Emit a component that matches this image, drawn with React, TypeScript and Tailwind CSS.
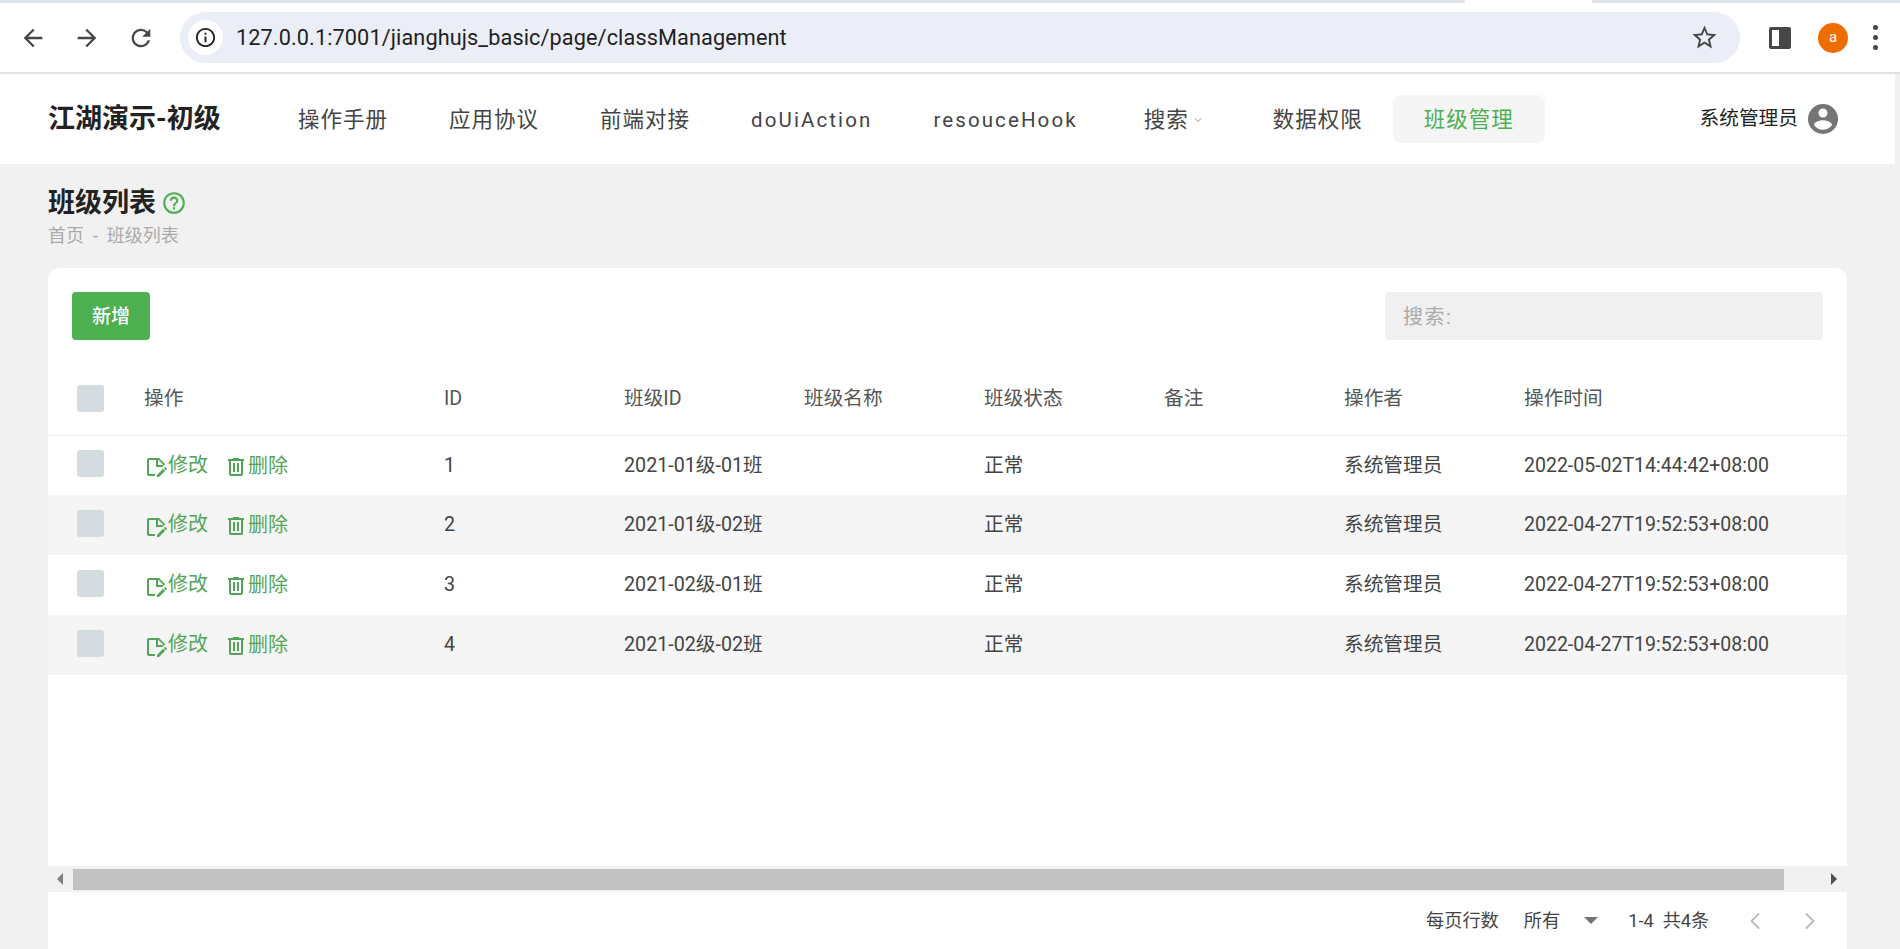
import { ChevronDown, ChevronLeft, ChevronRight } from "lucide-react"

const font = { fontFamily: 'Roboto, "Noto Sans CJK SC", sans-serif' }

const cjkNav = "text-[21.5px] tracking-[1px]"
const latinNav = "text-[20.5px] tracking-[2.1px]"
const navItems = [
  { label: "操作手册", cls: cjkNav },
  { label: "应用协议", cls: cjkNav },
  { label: "前端对接", cls: cjkNav },
  { label: "doUiAction", cls: latinNav },
  { label: "resouceHook", cls: latinNav },
]
const columns = ["操作", "ID", "班级ID", "班级名称", "班级状态", "备注", "操作者", "操作时间"]
const rows = [
  { id: 1, classId: "2021-01级-01班", time: "2022-05-02T14:44:42+08:00" },
  { id: 2, classId: "2021-01级-02班", time: "2022-04-27T19:52:53+08:00" },
  { id: 3, classId: "2021-02级-01班", time: "2022-04-27T19:52:53+08:00" },
  { id: 4, classId: "2021-02级-02班", time: "2022-04-27T19:52:53+08:00" },
]

const gridCols = "grid grid-cols-[80px_300px_180px_180px_180px_180px_180px_180px_1fr] items-center"

const Mdi = ({ d, className }: { d: string; className?: string }) => (
  <svg viewBox="0 0 24 24" fill="currentColor" className={className}>
    <path d={d} />
  </svg>
)

const icons = {
  back: "M20 11H7.83l5.59-5.59L12 4l-8 8 8 8 1.41-1.41L7.83 13H20v-2z",
  forward: "M4 11h12.17l-5.59-5.59L12 4l8 8-8 8-1.41-1.41L16.17 13H4v-2z",
  reload:
    "M17.65 6.35A7.958 7.958 0 0 0 12 4c-4.42 0-7.99 3.58-7.99 8s3.57 8 7.99 8c3.73 0 6.84-2.55 7.73-6h-2.08A5.99 5.99 0 0 1 12 18c-3.31 0-6-2.69-6-6s2.69-6 6-6c1.66 0 3.14.69 4.22 1.78L13 11h7V4l-2.35 2.35z",
  info: "M11 7h2v2h-2zm0 4h2v6h-2zm1-9C6.48 2 2 6.48 2 12s4.48 10 10 10 10-4.48 10-10S17.52 2 12 2zm0 18c-4.41 0-8-3.59-8-8s3.59-8 8-8 8 3.59 8 8-3.59 8-8 8z",
  star: "M22 9.24l-7.19-.62L12 2 9.19 8.63 2 9.24l5.46 4.73L5.82 21 12 17.27 18.18 21l-1.63-7.03L22 9.24zM12 15.4l-3.76 2.27 1-4.28-3.32-2.88 4.38-.38L12 6.1l1.71 4.04 4.38.38-3.32 2.88 1 4.28L12 15.4z",
  account:
    "M12,19.2C9.5,19.2 7.29,17.92 6,16C6.03,14 10,12.9 12,12.9C14,12.9 17.97,14 18,16C16.71,17.92 14.5,19.2 12,19.2M12,5A3,3 0 0,1 15,8A3,3 0 0,1 12,11A3,3 0 0,1 9,8A3,3 0 0,1 12,5M12,2A10,10 0 0,0 2,12A10,10 0 0,0 12,22A10,10 0 0,0 22,12A10,10 0 0,0 12,2Z",
  help: "M11,18H13V16H11V18M12,2A10,10 0 0,0 2,12A10,10 0 0,0 12,22A10,10 0 0,0 22,12A10,10 0 0,0 12,2M12,20C7.59,20 4,16.41 4,12C4,7.59 7.59,4 12,4C16.41,4 20,7.59 20,12C20,16.41 16.41,20 12,20M12,6A4,4 0 0,0 8,10H10A2,2 0 0,1 12,8A2,2 0 0,1 14,10C14,12 11,11.75 11,15H13C13,12.75 16,12.5 16,10A4,4 0 0,0 12,6Z",
  edit: "M18.13 12L19.39 10.74C19.83 10.3 20.39 10.06 21 10V9L15 3H5C3.89 3 3 3.89 3 5V19C3 20.1 3.89 21 5 21H11V19.13L11.13 19H5V5H12V12H18.13M14 4.5L19.5 10H14V4.5M19.13 13.83L21.17 15.87L15.04 22H13V19.96L19.13 13.83M22.85 14.19L21.87 15.17L19.83 13.13L20.81 12.15C21 11.95 21.33 11.95 21.53 12.15L22.85 13.47C23.05 13.67 23.05 14 22.85 14.19Z",
  trash: "M9,3V4H4V6H5V19A2,2 0 0,0 7,21H17A2,2 0 0,0 19,19V6H20V4H15V3H9M7,6H17V19H7V6M9,8V17H11V8H9M13,8V17H15V8H13Z",
}

const Checkbox = ({ lift }: { lift?: boolean }) => (
  <div className={`ml-[29px] h-[27px] w-[27px] rounded-[3px] bg-[#d5dce0] ${lift ? "-mt-[4px]" : ""}`} />
)

const BrowserBar = () => (
  <div className="shrink-0">
    <div className="relative h-[3px] bg-[#dee3e9]">
      <div className="absolute left-[1465px] top-0 h-[3px] w-[127px] bg-white" />
    </div>
    <div className="flex h-[69px] items-center bg-white text-[#474747]">
      <Mdi d={icons.back} className="ml-[19px] h-[28px] w-[28px]" />
      <Mdi d={icons.forward} className="ml-[26px] h-[28px] w-[28px]" />
      <Mdi d={icons.reload} className="ml-[26px] h-[28px] w-[28px]" />
      <div className="ml-[25px] flex h-[51px] w-[1560px] items-center rounded-full bg-[#ebeef7]">
        <div className="ml-[8px] flex h-[35px] w-[35px] items-center justify-center rounded-full bg-white">
          <Mdi d={icons.info} className="h-[23px] w-[23px] text-[#222]" />
        </div>
        <span className="ml-[13px] pt-[1px] text-[21.7px] tracking-[0.1px] text-[#1f1f1f]">127.0.0.1:7001/jianghujs_basic/page/classManagement</span>
        <Mdi d={icons.star} className="ml-auto mr-[21px] h-[29px] w-[29px]" />
      </div>
      <div className="ml-[29px] flex h-[22px] w-[22px] rounded-[2px] border-[3px] border-[#474747]">
        <div className="ml-auto h-full w-[9px] bg-[#474747]" />
      </div>
      <div className="ml-[27px] flex h-[30px] w-[30px] items-center justify-center rounded-full bg-[#ef6c00] text-[15px] text-white">a</div>
      <div className="ml-[25px] flex flex-col gap-[5px]">
        <div className="h-[5px] w-[5px] rounded-full bg-[#474747]" />
        <div className="h-[5px] w-[5px] rounded-full bg-[#474747]" />
        <div className="h-[5px] w-[5px] rounded-full bg-[#474747]" />
      </div>
    </div>
    <div className="h-[2px] bg-[#e3e3e3]" />
  </div>
)

const TopNav = () => (
  <header className="mr-[5px] flex h-[90px] shrink-0 items-center bg-white pl-[48px]">
    <div className="w-[220px] text-[27px] font-bold leading-none text-[#222]">江湖演示-初级</div>
    <nav className="flex items-center text-[#444]">
      {navItems.map((item) => (
        <div key={item.label} className={`mr-px flex h-[48px] items-center px-[30px] pt-[2px] ${item.cls}`}>
          {item.label}
        </div>
      ))}
      <div className={`ml-[5px] mr-[9px] flex h-[48px] items-center px-[30px] pt-[2px] ${cjkNav}`}>
        搜索
        <ChevronDown className="ml-[3px] h-[12px] w-[12px] text-[#999]" />
      </div>
      <div className={`flex h-[48px] items-center px-[30px] pt-[2px] ${cjkNav}`}>数据权限</div>
      <div className={`flex h-[48px] w-[152px] items-center justify-center rounded-lg bg-[#f5f5f5] pt-[2px] text-[#4caf50] ${cjkNav}`}>班级管理</div>
    </nav>
    <div className="ml-auto mr-[54px] flex items-center text-[19.7px] text-[#222]">
      系统管理员
      <Mdi d={icons.account} className="ml-[7px] h-[36px] w-[36px] text-[#757575]" />
    </div>
  </header>
)

const ActionCell = () => (
  <div className="flex items-center pl-[16px] text-[20px] text-[#52a556]">
    <Mdi d={icons.edit} className="mt-[3px] h-[24px] w-[24px]" />
    <span className="-mt-[2px]">修改</span>
    <Mdi d={icons.trash} className="ml-[16px] mt-[2px] h-[24px] w-[24px]" />
    <span>删除</span>
  </div>
)

const DataTable = () => (
  <div className="mt-[20px] text-[19.7px] text-[#444]">
    <div className={`${gridCols} h-[76px] border-b border-[#eceeee] pt-[2px] text-[#555]`}>
      <Checkbox />
      {columns.map((c) => (
        <div key={c} className="pl-[16px]">
          {c}
        </div>
      ))}
    </div>
    {rows.map((r, i) => (
      <div key={r.id} className={`${gridCols} ${i === 0 ? "h-[59px]" : "h-[60px]"} ${i % 2 === 1 ? "bg-[#f5f5f5]" : "bg-white"}`}>
        <Checkbox lift />
        <ActionCell />
        <div className="pl-[16px]">{r.id}</div>
        <div className="whitespace-nowrap pl-[16px]">{r.classId}</div>
        <div />
        <div className="pl-[16px]">正常</div>
        <div />
        <div className="pl-[16px]">系统管理员</div>
        <div className="whitespace-nowrap pl-[16px] text-[19.5px]">{r.time}</div>
      </div>
    ))}
  </div>
)

const ScrollBar = () => (
  <div className="mt-auto flex h-[26px] shrink-0 items-center bg-[#f1f1f1]">
    <div className="ml-[9px] h-0 w-0 border-y-[6px] border-r-[6px] border-y-transparent border-r-[#808080]" />
    <div className="ml-[10px] h-[21px] w-[1711px] bg-[#c1c1c1]" />
    <div className="ml-[47px] h-0 w-0 border-y-[6px] border-l-[6px] border-y-transparent border-l-[#505050]" />
  </div>
)

const Footer = () => (
  <div className="flex h-[57px] shrink-0 items-center text-[18.2px] text-[#444]">
    <span className="ml-[1378px]">每页行数</span>
    <span className="ml-[25px]">所有</span>
    <div className="ml-[24px] h-0 w-0 border-x-[7px] border-t-[7px] border-x-transparent border-t-[#757575]" />
    <span className="ml-[30px] whitespace-nowrap">1-4&nbsp; 共4条</span>
    <ChevronLeft strokeWidth={1.75} className="ml-[32px] h-[28px] w-[28px] text-[#bdbdbd]" />
    <ChevronRight strokeWidth={1.75} className="ml-[27px] h-[28px] w-[28px] text-[#bdbdbd]" />
  </div>
)

export default function App() {
  return (
    <div style={font} className="flex h-[949px] w-[1900px] flex-col overflow-hidden bg-[#f1f1f1]">
      <BrowserBar />
      <TopNav />
      <main className="flex min-h-0 flex-1 flex-col px-[48px] pr-[53px]">
        <div className="mt-[24px] flex items-center text-[27px] font-bold leading-[30px] text-[#222]">
          班级列表
          <Mdi d={icons.help} className="ml-[5px] h-[26px] w-[26px] text-[#4caf50]" />
        </div>
        <div className="mt-[5px] text-[18px] leading-[26px] text-[#aaa]">首页&nbsp; -&nbsp; 班级列表</div>
        <section className="mt-[19px] flex min-h-0 flex-1 flex-col rounded-t-xl bg-white">
          <div className="flex items-center justify-between px-[24px] pt-[24px]">
            <button className="h-[48px] w-[78px] rounded bg-[#4caf50] pt-[2px] text-[19px] font-medium text-white">新增</button>
            <div className="flex h-[48px] w-[438px] items-center rounded bg-[#f0f0f0] pl-[18px] pt-[2px] text-[20px] tracking-[1.5px] text-[#aaa]">搜索:</div>
          </div>
          <DataTable />
          <ScrollBar />
          <Footer />
        </section>
      </main>
    </div>
  )
}
